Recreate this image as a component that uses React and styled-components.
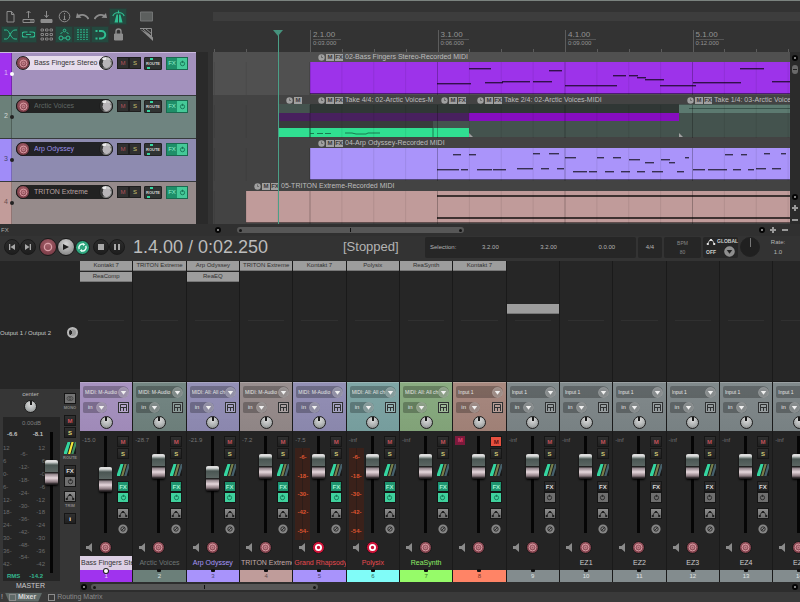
import React from 'react';
import styled, { createGlobalStyle, css } from 'styled-components';

const GlobalStyle = createGlobalStyle`
  * { box-sizing: border-box; }
  html, body { margin: 0; background: #333333; }
  body {
    font-family: "Liberation Sans", Arial, sans-serif;
    font-size: 7px;
    line-height: 8px;
    color: #b4b4b4;
    overflow: hidden;
  }
  button, select, input {
    font: inherit;
    color: inherit;
    margin: 0;
    padding: 0;
    border: 0;
    background: none;
  }
  svg { display: block; flex-shrink: 0; }
`;

/* ---------- data ---------- */

// width of the visible timeline, in ticks
const VIEW = 577;
const BAR = 127.5;
const FIRST_BAR = 97;
const pct = (ticks) => `${(ticks / VIEW) * 100}%`;

const tracks = [
  { name: 'Bass Fingers Stereo', strip: '#a033ee', body: '#a391bd', text: '#333333', field: '#e6dcec', num: '#d9b8f5', selected: true },
  { name: 'Arctic Voices', strip: '#6b8079', body: '#6f8480', text: '#5f6664', field: '#222323', num: '#d0d8d4' },
  { name: 'Arp Odyssey', strip: '#a08cf8', body: '#8e8bb0', text: '#9b8fe8', field: '#222226', num: '#4a4470' },
  { name: 'TRITON Extreme', strip: '#c29c9a', body: '#968b8b', text: '#b9a3a3', field: '#222222', num: '#6a5050' },
];

const lanes = [
  {
    selected: true,
    clips: [{ x: 97, w: 480, label: '02-Bass Fingers Stereo-Recorded MIDI', color: '#9d33ea' }],
    notes: [
      [224, 34, 31], [256, 22, 16], [272, 18, 30], [289, 28, 29], [320, 19, 29], [336, 13, 18], [352, 52, 33],
      [400, 13, 23], [416, 9, 23], [424, 9, 25], [432, 19, 27], [447, 36, 33], [480, 48, 30], [527, 24, 16], [559, 18, 29],
    ],
  },
  {
    clips: [
      { x: 65, w: 32, label: '', noFx: true },
      { x: 97, w: 123, label: 'Take 4/4: 02-Arctic Voices-MIDI' },
      { x: 220, w: 36, label: '' },
      { x: 256, w: 210, label: 'Take 2/4: 02-Arctic Voices-MIDI' },
      { x: 466, w: 111, label: 'Take 1/4: 03-Arctic Voices-MIDI' },
    ],
    takes: true,
    notes: [],
  },
  {
    clips: [{ x: 97, w: 480, label: '04-Arp Odyssey-Recorded MIDI', color: '#aa94fa' }],
    notes: [
      [240, 8, 16], [256, 7, 16], [224, 22, 31], [248, 7, 31], [264, 15, 31], [280, 13, 31],
      [320, 7, 15], [336, 10, 15], [304, 16, 30], [328, 8, 30], [344, 7, 30],
      [352, 11, 19], [384, 7, 19], [400, 8, 19], [416, 11, 21], [432, 9, 24], [448, 9, 21], [456, 6, 24], [472, 4, 19],
      [360, 14, 33], [376, 8, 33], [392, 9, 33], [408, 9, 33], [424, 8, 33], [439, 11, 33], [464, 7, 33],
      [480, 12, 31], [495, 19, 31], [520, 8, 31], [535, 6, 31], [543, 10, 30], [559, 9, 30],
      [512, 8, 16], [528, 6, 16], [551, 6, 15], [568, 5, 15],
    ],
  },
  {
    clips: [{ x: 33, w: 544, label: '05-TRITON Extreme-Recorded MIDI', color: '#c09b9a' }],
    notes: [[224, 353, 14], [224, 353, 36]],
  },
];

const midiM = 'MIDI: M-Audio';
const midiAll = 'MIDI: All: All ch';
const channels = [
  { name: 'Bass Fingers Stereo', fx: ['Kontakt 7', 'ReaComp'], input: midiM, db: '-15.0', vol: 57, tint: '#a590bf', bar: '#a033ee', num: '#ecd8fa', text: '#333333', selected: true },
  { name: 'Arctic Voices', fx: ['TRITON Extreme'], input: midiM, db: '-28.7', vol: 75, tint: '#70837f', bar: '#6b7f79', num: '#dfe5e2', text: '#6f7674' },
  { name: 'Arp Odyssey', fx: ['Arp Odyssey', 'ReaEQ'], input: midiAll, db: '-21.9', vol: 58, tint: '#918db5', bar: '#a893fb', num: '#4c4674', text: '#a497fa' },
  { name: 'TRITON Extreme', fx: ['TRITON Extreme'], input: midiM, db: '-7.2', vol: 75, tint: '#958a8a', bar: '#bf9c9a', num: '#604c4b', text: '#c2aaa8' },
  { name: 'Grand Rhapsody', fx: ['Kontakt 7'], input: midiM, db: '-7.5', vol: 75, tint: '#908cb3', bar: '#a893fb', num: '#4c4674', text: '#e84a4f', armed: true },
  { name: 'Polysix', fx: ['Polysix'], input: midiAll, db: '-inf', vol: 75, tint: '#7ba3a3', bar: '#80fcf8', num: '#2f6462', text: '#e84a4f', armed: true },
  { name: 'ReaSynth', fx: ['ReaSynth'], input: midiAll, db: '-inf', vol: 75, tint: '#86a97d', bar: '#96fb69', num: '#3d672c', text: '#8fee66' },
  { name: '', fx: ['Kontakt 7'], input: 'Input 1', db: '', vol: 75, tint: '#a5857b', bar: '#ff8466', num: '#7a382a', text: '#cccccc', muted: true },
  { name: '', fx: [], input: 'Input 1', send: true },
  { name: 'EZ1', fx: [], input: 'Input 1' },
  { name: 'EZ2', fx: [], input: 'Input 1' },
  { name: 'EZ3', fx: [], input: 'Input 1' },
  { name: 'EZ4', fx: [], input: 'Input 1' },
  { name: 'EZ5', fx: [], input: 'Input 1' },
].map((c) => ({ db: '-inf', vol: 75, tint: '#7d8688', bar: '#838c8e', num: '#e0e4e4', text: '#cccccc', ...c }));

/* ---------- shared parts ---------- */

const Knob = styled.input.attrs({ type: 'range' })`
  appearance: none;
  flex-shrink: 0;
  width: ${(p) => p.$size || 13}px;
  height: ${(p) => p.$size || 13}px;
  border-radius: 50%;
  border: 1px solid #1e1e1e;
  background:
    linear-gradient(#181818, #181818) 50% 0 / 2px 4px no-repeat,
    radial-gradient(circle at 50% 30%, #dcdcdc, #a9adad 60%, #777777);
  ${(p) => p.$dark && css`
    border-color: #222222;
    background: linear-gradient(#777777, #777777) 50% 0 / 1px 9px no-repeat, #202020;
  `}
  ${(p) => p.$trim && css`
    background:
      radial-gradient(circle at 55% 55%, #b8b5b8 0 42%, transparent 46%),
      conic-gradient(#c8c8c8 0 12%, #8a8a8a 20% 55%, #3a3a3a 62% 85%, #eeeeee 90%);
  `}
  ${(p) => p.$ring && css`
    border: 2px solid #b9b9b9;
    background: conic-gradient(#9a9a9a 0 60%, #262626 60% 90%, #9a9a9a 90%);
  `}
  &::-webkit-slider-thumb { appearance: none; opacity: 0; width: 1px; height: 1px; }
`;

const Fader = styled.input.attrs({ type: 'range' })`
  appearance: none;
  writing-mode: vertical-lr;
  direction: rtl;
  width: 13px;
  height: ${(p) => p.$length}px;
  background: linear-gradient(#050505, #050505) 50% 0 / 3px 100% no-repeat;
  &::-webkit-slider-thumb {
    appearance: none;
    width: 13px;
    height: 25px;
    border-radius: 2px;
    box-shadow: 0 1px 2px #000000;
    background: linear-gradient(#dddddd 0 2px, #a9b0ae 3px, #4a5653 5px, #5b6663 12px, #222222 12px 13px, #8f8288 14px, #e6d7dc 18px, #8b7a80 22px, #1f1b1d 24px);
  }
`;

const SquareButton = styled.button`
  display: flex;
  align-items: center;
  justify-content: center;
  width: 12px;
  height: 11px;
  border: 1px solid #161616;
  background: ${(p) => p.$bg || 'linear-gradient(#303030, #202020)'};
  color: ${(p) => p.$color || '#bbbbbb'};
`;

const RoundButton = styled.button`
  display: flex;
  align-items: center;
  justify-content: center;
  flex-shrink: 0;
  width: ${(p) => p.$size}px;
  height: ${(p) => p.$size}px;
  border-radius: 50%;
  border: 1px solid #1a1a1a;
  background: ${(p) => p.$bg || 'linear-gradient(#2c2c2c, #1e1e1e)'};
`;

const Tiny = styled.span`
  font-size: 5px;
  line-height: 6px;
  color: #888888;
`;

const recordBg = 'radial-gradient(circle at 50% 35%, #a35f69, #71333e)';

function RecordIcon({ armed, size }) {
  return (
    <svg width={size} height={size} viewBox="0 0 10 10" fill="none">
      <circle cx="5" cy="5" r={armed ? 2.9 : 3.8} stroke={armed ? '#ffffff' : '#d99aa2'} strokeWidth={armed ? 2 : 1.1} />
      {!armed && <circle cx="5" cy="5" r="1.4" stroke="#d99aa2" strokeWidth=".9" />}
    </svg>
  );
}

function RecordButton({ label, armed, size = 13 }) {
  return (
    <RoundButton $size={size} $bg={armed ? '#cf1238' : recordBg} aria-label={label}>
      <RecordIcon armed={armed} size={size > 14 ? 11 : 9} />
    </RoundButton>
  );
}

function PowerIcon({ color }) {
  return (
    <svg width="7" height="7" viewBox="0 0 8 8" fill="none" stroke={color}>
      <circle cx="4" cy="4.2" r="2.4" />
      <path d="M4 .8v2.6" />
    </svg>
  );
}

function EnvelopeIcon({ color = '#1f1f1f' }) {
  return (
    <svg width="10" height="9" viewBox="0 0 10 9" stroke={color} fill={color}>
      <path d="M1.5 7 3.8 3h2.4L8.5 7" fill="none" strokeWidth=".8" />
      <path d="M.8 6h2v2h-2zM4 2h2v2H4zM7.2 6h2v2h-2z" stroke="none" />
    </svg>
  );
}

function RouteIcon({ master }) {
  return (
    <svg width="12" height="12" viewBox="0 0 12 12">
      <path d="M3 0H12V12H0V10z" fill="#191919" />
      <path d="M3.500 0h3L3 12H0V10z" fill="#35d5a0" />
      <path d="M7.500 0h2.200L6.300 12H4z" fill={master ? '#f4e63c' : '#77804c'} />
      <path d="M10.700 0H12v4L9.500 12H7.200z" fill={master ? '#3f8f62' : '#46616c'} />
    </svg>
  );
}

function ArrowDot({ color = '#f0f0f0', fill = 'rgba(255,255,255,.25)' }) {
  return (
    <svg width="11" height="11" viewBox="0 0 11 11">
      <circle cx="5.500" cy="5.500" r="5" fill={fill} stroke="rgba(255,255,255,.2)" />
      <path d="M2.800 4h5.400L5.500 7.700z" fill={color} />
    </svg>
  );
}

/* ---------- toolbar ---------- */

const Workspace = styled.div`
  min-width: 800px;
  min-height: 100vh;
  display: flex;
  flex-direction: column;
  background: #333333;
  border-top: 1px solid #7b837f;
`;

const Upper = styled.div`
  display: grid;
  grid-template-columns: 208px minmax(0, 1fr) 10px;
  grid-template-rows: 51px auto;
`;

const Toolbar = styled.div`
  display: grid;
  grid-template-columns: repeat(7, 18px) 28px;
  grid-template-rows: 17px 17px;
  row-gap: 1px;
  align-content: start;
  padding: 7px 0 0 1px;
`;

const ToolButton = styled.button`
  display: flex;
  align-items: center;
  justify-content: center;
  padding-left: ${(p) => (p.$last ? 10 : 0)}px;
  background: ${(p) => (p.$on ? '#24493f' : 'transparent')};
  box-shadow: ${(p) => (p.$on ? 'inset 0 0 0 1px #2b3a36' : 'none')};
  color: ${(p) => (p.$on ? '#2fbf92' : '#8d8d8d')};
`;

const tools = [
  { label: 'New project', d: <path d="M3 1.500h4.500l2.500 3v7.500H3zM7.500 1.500v3H10" /> },
  { label: 'Open project', d: <><path d="M1 9.500h11v3H1zM6.500 8V1M4.500 3l2-2 2 2" /><path d="M8 11h3" /></> },
  { label: 'Save project', d: <><path d="M1 9.500h11v3H1z" fill="currentColor" /><path d="M6.500 1v6.500M4.500 5l2 2.500 2-2.500" /></> },
  { label: 'Project settings', d: <><circle cx="6.500" cy="6.500" r="5.300" /><path d="M6.500 5.500v4M6.500 3v1.300M5.300 9.500h2.400" /></> },
  { label: 'Undo', d: <><path d="M2 6c4-2 8-1 10.500 3" strokeWidth="1.800" /><path d="M0 8l1-5 4.500 4.800z" fill="currentColor" stroke="none" /></> },
  { label: 'Redo', d: <><path d="M11 6C7 4 3 5 .5 9" strokeWidth="1.800" /><path d="M13 8l-1-5-4.500 4.800z" fill="currentColor" stroke="none" /></> },
  { label: 'Metronome', on: true, d: <><path d="M4.500 4.500H6v8H2.500zM7 4.500h1.500l2 8H7z" fill="currentColor" stroke="none" /><path d="M.8 6c1-2.500 3-3.500 5.700-3.500s4.700 1 5.700 3.500M6.500 .5v3" strokeWidth="1.200" /></> },
  { label: 'Blank', d: <path d="M.5 2h12v9H.5z" fill="#5c5f5e" stroke="#727474" /> },
  { label: 'Auto crossfade', on: true, d: <path d="M0 2h2.500c3 0 4 9 8.500 9h2M0 11h2.500c3 0 4-9 8.500-9h2" /> },
  { label: 'Item grouping', on: true, d: <path d="M5.500 4h-3a2.500 2.500 0 0 0 0 5h3M7.500 4h3a2.500 2.500 0 0 1 0 5h-3M4 6.500h5" strokeWidth="1.200" /> },
  { label: 'Ripple editing', d: <path d="M1 1h2.500v2H1zM5.500 1H8v2H5.500zM10 1h2.500v2H10zM1 5.500h2.500v2H1zM5.500 5.500H8v2H5.500zM10 5.500h2.500v2H10zM1 10h2.500v2H1zM5.500 10H8v2H5.500zM10 10h2.500v2H10z" strokeWidth=".9" /> },
  { label: 'Envelope points', on: true, d: <><circle cx="3" cy="10" r="2" /><circle cx="10" cy="10" r="2" /><circle cx="6.500" cy="2.500" r="1.300" /><path d="M5 10h3M2.500 6l2-2M8.500 4l2 2" /></> },
  { label: 'Grid lines', on: true, d: <path d="M2 1v11M5 1v11M8 1v11M11 1v11" strokeDasharray="1.500 1" strokeWidth="1.300" /> },
  { label: 'Snap', on: true, d: <><path d="M5 3h2.500a3.500 3.500 0 0 1 0 7.500H5" strokeWidth="2" /><path d="M1.500 3h2M1.500 10.500h2" strokeWidth="2" /></> },
  { label: 'Lock', d: <><path d="M2.500 6h8v6h-8z" fill="currentColor" /><path d="M4 6V3.500a2.500 2.500 0 0 1 5 0V6" strokeWidth="1.400" /></> },
  { label: 'Custom', d: <><path d="M0 1l13 12V9.500L9 6z" fill="currentColor" stroke="none" /><path d="M0 .5h11.500v10M3 1l9 8M6 1l6 5" /></> },
];

/* ---------- track list ---------- */

const TrackList = styled.div`
  background: #2a2a2a;
`;

const TrackRow = styled.div`
  display: grid;
  grid-template-columns: 12px minmax(0, 1fr);
  height: 43px;
  margin-right: 12px;
  border-top: 1px solid ${(p) => (p.$selected ? '#cbb9de' : '#36393c')};
  background: ${(p) => p.$bg};
`;

const TrackTab = styled.div`
  position: relative;
  padding: 16px 0 0 4px;
  border-right: 1px solid rgba(0, 0, 0, 0.25);
  background: ${(p) => p.$bg};
  color: ${(p) => p.$color};
  &::after {
    content: "";
    position: absolute;
    right: -3px;
    top: 19px;
    width: 4px;
    height: 4px;
    border-radius: 50%;
    background: ${(p) => (p.$selected ? '#ffffff' : '#222222')};
  }
`;

const TrackControls = styled.div`
  display: flex;
  align-items: center;
  height: 14px;
  margin: 3px 0 0 4px;
`;

const TrackName = styled.div`
  display: flex;
  align-items: center;
  flex-shrink: 0;
  width: 97px;
  height: 14px;
  margin-right: 4px;
  border-radius: 7px;
  background: ${(p) => p.$bg};
  color: ${(p) => p.$color};
`;

const NameField = styled.input`
  width: 65px;
  margin-left: 4px;
  outline: 0;
`;

const PairButton = styled.button`
  height: 12px;
  width: 12px;
  font-size: 6px;
  border: 1px solid #1e1e1e;
  background: #303030;
  color: ${(p) => p.$color};
`;

const TrackRoute = styled.button`
  width: 18px;
  height: 13px;
  margin: 0 4px 0 3px;
  font-size: 4px;
  font-weight: bold;
  line-height: 11px;
  white-space: nowrap;
  border: 1px solid #222222;
  border-radius: 1px;
  color: #d2d2d2;
  background: linear-gradient(#35d5a0, #35d5a0) 5px 0 / 3px 2px no-repeat,
    linear-gradient(#35d5a0, #35d5a0) 2px 9px / 3px 2px no-repeat, #303332;
`;

const FxPair = styled.div`
  display: flex;
  height: 13px;
  border: 1px solid #196a4f;
  background: #1f8f69;
  button {
    display: flex;
    align-items: center;
    justify-content: center;
    width: 10px;
    font-size: 6px;
    color: #8ff0cc;
  }
  button + button { background: #45c998; }
`;

/* ---------- arrange view ---------- */

const RulerArea = styled.div`
  margin-left: 5px;
  display: flex;
  flex-direction: column;
`;

const Overview = styled.div`
  height: 9px;
  margin-top: 11px;
  margin-right: -10px;
  background: #3d3d3d;
`;

const Ruler = styled.div`
  position: relative;
  flex: 1;
  font-size: 8px;
  color: #949494;
  small { display: block; font-size: 6px; line-height: 7px; }
  small::before {
    content: "";
    display: block;
    width: 28px;
    border-top: 1px solid #555555;
  }
`;

const BarMark = styled.div`
  position: absolute;
  top: 9px;
  bottom: 0;
  padding-left: 2px;
  line-height: 9px;
  border-left: 1px solid #5c5c5c;
`;

const BeatMark = styled.div`
  position: absolute;
  bottom: 0;
  height: 3px;
  border-left: 1px solid #5c5c5c;
`;

const Lanes = styled.div`
  position: relative;
  margin-left: 5px;
`;

const Lane = styled.div`
  position: relative;
  height: 43px;
  overflow: hidden;
  background: ${(p) => (p.$selected ? '#505050' : '#434343')};
`;

const ClipBox = styled.div`
  position: absolute;
  top: 0;
  bottom: 0;
  display: flex;
  flex-direction: column;
`;

const ClipLabel = styled.div`
  display: flex;
  align-items: center;
  gap: 1px;
  height: 10px;
  padding-left: 8px;
  overflow: hidden;
  white-space: nowrap;
  color: #bdbdbd;
  b {
    flex-shrink: 0;
    width: 8px;
    height: 7px;
    font-size: 6px;
    line-height: 7px;
    text-align: center;
    color: #3a3a3a;
    background: #a0a0a0;
  }
  span { padding-left: 1px; }
`;

const ClipBody = styled.div`
  flex: 1;
  margin-bottom: 1px;
  border-bottom: 1px solid rgba(0, 0, 0, 0.5);
  background: ${(p) => p.$color};
`;

const LaneDrawing = styled.svg`
  position: absolute;
  inset: 0;
  width: 100%;
  height: 100%;
  pointer-events: none;
`;

const Playhead = styled.div`
  position: absolute;
  top: -17px;
  bottom: 0;
  width: 1px;
  background: #4b9f87;
  &::before {
    content: "";
    position: absolute;
    left: -5px;
    top: -5px;
    border: 5px solid transparent;
    border-top: 6px solid #46927d;
    border-bottom: 0;
  }
`;

const VScroll = styled.div`
  display: flex;
  flex-direction: column;
  align-items: center;
  justify-content: space-between;
  padding: 3px 0 0;
  background: #2b2b2b;
`;

const ScrollStack = styled.div`
  display: flex;
  flex-direction: ${(p) => (p.$row ? 'row' : 'column')};
  align-items: center;
  gap: 4px;
`;

const ScrollDot = styled.button`
  width: 6px;
  height: 6px;
  border-radius: 50%;
  border: 2px solid #050505;
  background: #aaaaaa;
`;

const ScrollGrip = styled.div`
  width: 6px;
  height: 9px;
  border-radius: 3px;
  background: linear-gradient(#222222, #222222) 50% 50% / 4px 1px no-repeat, #6a6a6a;
`;

const ZoomButton = styled.button`
  width: 8px;
  height: 8px;
  background: linear-gradient(#999999, #999999) 50% 50% / 6px 2px no-repeat
    ${(p) => (p.$plus ? ', linear-gradient(#999999, #999999) 50% 50% / 2px 6px no-repeat' : '')};
`;

const HScroll = styled.div`
  display: flex;
  align-items: center;
  gap: 16px;
  height: 12px;
  padding: 0 11px 0 2px;
  background: #303030;
`;

const MixerScroll = styled(HScroll)`
  gap: 4px;
  height: 10px;
  padding: 0 2px 0 1px;
  background: #2d2d2d;
`;

const ScrollThumb = styled.div`
  display: flex;
  align-items: center;
  justify-content: space-between;
  width: 227px;
  height: 6px;
  padding: 0 2px;
  border-radius: 3px;
  background: linear-gradient(#111111, #111111) 50% 50% / 1px 4px no-repeat, #575757;
  &::before, &::after {
    content: "";
    width: 3px;
    height: 3px;
    border-radius: 50%;
    background: #151515;
  }
`;

const Spacer = styled.div`
  flex: 1;
`;

const FxRow = styled.div`
  display: grid;
  grid-template-columns: 213px minmax(0, 1fr);
  align-items: center;
  background: #303030;
  > span { padding-left: 1px; font-size: 6px; color: #aaaaaa; }
`;

/* ---------- transport ---------- */

const Transport = styled.div`
  display: flex;
  align-items: center;
  height: 25px;
  padding: 0 4px 3px;
`;

const TransportGroup = styled.div`
  display: flex;
  align-items: center;
  margin-right: ${(p) => p.$gap}px;
`;

const Clock = styled.output`
  width: 210px;
  font-size: 18px;
  line-height: 20px;
  color: #bcbcbc;
`;

const Status = styled.output`
  flex: 1;
  font-size: 13px;
  line-height: 16px;
  color: #b4b4b4;
`;

const InfoBox = styled.div`
  display: flex;
  flex-direction: column;
  align-items: center;
  justify-content: space-evenly;
  flex-shrink: 0;
  width: ${(p) => p.$width}px;
  height: 21px;
  margin-right: 2px;
  border-radius: 2px;
  font-size: 6px;
  background: #262626;
`;

const SelectionBox = styled(InfoBox)`
  display: grid;
  grid-template-columns: 36px repeat(3, 58px);
  text-align: center;
`;

const GlobalLine = styled.div`
  display: flex;
  align-items: center;
  justify-content: space-between;
  gap: 1px;
  width: 29px;
  font-size: 5px;
  font-weight: bold;
  color: #cfcfcf;
`;

const RateBox = styled.div`
  display: flex;
  flex-direction: column;
  align-items: center;
  gap: 2px;
  width: 36px;
  font-size: 6px;
`;

/* ---------- mixer ---------- */

const Mixer = styled.div`
  display: grid;
  grid-template-columns: 80px minmax(0, 1fr);
  background: #262626;
`;

const Strips = styled.div`
  display: flex;
  overflow: hidden;
`;

const Strip = styled.section`
  flex: 0 0 calc(100% / 13.5);
  min-width: 0;
  display: flex;
  flex-direction: column;
  border-right: 1px solid #1a1a1a;
  background: #242424;
`;

const FxArea = styled.div`
  display: flex;
  flex-direction: column;
  height: 121px;
  background: #262626;
  border-bottom: 1px solid #1b1b1b;
`;

const FxList = styled.div`
  display: flex;
  flex-direction: column;
  justify-content: ${(p) => (p.$end ? 'flex-end' : 'flex-start')};
  gap: 1px;
  height: 53px;
  margin-bottom: 6px;
`;

const FxSlot = styled.button`
  height: 10px;
  overflow: hidden;
  font-size: 6px;
  line-height: 9px;
  white-space: nowrap;
  color: #303030;
  background: #9d9d9d;
  border-bottom: 1px solid #777777;
`;

const SendLine = styled.div`
  margin: 0 8px;
  border-top: 1px solid #303030;
`;

const InputArea = styled.div`
  display: flex;
  flex-direction: column;
  gap: 3px;
  height: 49px;
  padding: 3px 3px 0;
  border-top: 1px solid rgba(255, 255, 255, 0.25);
  background: linear-gradient(rgba(255, 255, 255, 0.03), rgba(0, 0, 0, 0.04)) ${(p) => p.$tint};
`;

const InputPicker = styled.label`
  display: flex;
  align-items: center;
  height: 12px;
  padding-left: 2px;
  border-radius: 2px 6px 6px 2px;
  background: rgba(0, 0, 0, 0.25);
  select {
    appearance: none;
    flex: 1;
    min-width: 0;
    font-size: 5px;
    outline: 0;
    color: #e4e4e4;
    text-overflow: clip;
  }
`;

const InputRow = styled.div`
  display: flex;
  align-items: center;
  justify-content: space-between;
  height: 12px;
`;

const InPill = styled.button`
  display: flex;
  align-items: center;
  justify-content: space-between;
  width: 24px;
  height: 11px;
  padding-left: 5px;
  border-radius: 2px 6px 6px 2px;
  font-size: 6px;
  color: #e4e4e4;
  background: rgba(0, 0, 0, 0.25);
`;

const PanRow = styled.div`
  display: flex;
  justify-content: center;
`;

const Channel = styled.div`
  display: grid;
  grid-template-columns: 19px 18px 12px;
  height: 107px;
  padding-top: 5px;
`;

const LevelColumn = styled.div`
  display: flex;
  flex-direction: column;
  align-items: flex-start;
  gap: 4px;
  padding-left: 2px;
  font-size: 6px;
  white-space: nowrap;
  color: #747474;
`;

const MuteFlag = styled.b`
  width: 10px;
  line-height: 9px;
  text-align: center;
  color: #e0406b;
  background: #7c1a3c;
`;

const HotMeter = styled.div`
  display: flex;
  flex-direction: column;
  justify-content: space-around;
  align-items: center;
  width: 15px;
  height: 92px;
  font-weight: bold;
  color: #dd5430;
  background: repeating-linear-gradient(90deg, #3a211a 0 7px, #2c1d19 7px 8px);
`;

const SideColumn = styled.div`
  display: flex;
  flex-direction: column;
  gap: 5px;
  font-size: 6px;
  font-weight: bold;
`;

const ButtonPair = styled.div`
  display: flex;
  flex-direction: column;
  gap: ${(p) => p.$gap || 0}px;
`;

const ArmRow = styled.div`
  display: grid;
  grid-template-columns: 19px 13px;
  align-items: center;
  height: 18px;
  svg { justify-self: center; }
`;

const StripName = styled.div`
  height: 14px;
  padding: 0 1px;
  overflow: hidden;
  line-height: 14px;
  white-space: nowrap;
  text-align: ${(p) => (p.$long ? 'left' : 'center')};
  color: ${(p) => p.$color};
  background: ${(p) => (p.$selected ? '#dccfe4' : 'transparent')};
`;

const StripNumber = styled.div`
  position: relative;
  height: 12px;
  font-size: 6px;
  line-height: 13px;
  text-align: center;
  color: ${(p) => p.$color};
  background: ${(p) => p.$bg};
  &::before {
    content: "";
    position: absolute;
    left: calc(50% - 2px);
    top: -1px;
    width: 4px;
    height: ${(p) => (p.$selected ? 4 : 3)}px;
    border-radius: ${(p) => (p.$selected ? '50%' : '1px')};
    background: ${(p) => (p.$selected ? '#ffffff' : '#111111')};
    box-shadow: ${(p) => (p.$selected ? '0 0 0 1px #222222' : 'none')};
  }
`;

const Master = styled.section`
  display: flex;
  flex-direction: column;
`;

const MasterOutput = styled.div`
  display: flex;
  align-items: center;
  justify-content: space-between;
  height: 128px;
  padding: 15px 2px 0 0;
  font-size: 6px;
  white-space: nowrap;
  color: #c6c6c6;
`;

const MasterPanel = styled.div`
  flex: 1;
  display: grid;
  grid-template-columns: 59px 12px;
  column-gap: 4px;
  background: #363636;
  padding: 0 2px 0 1px;
`;

const MasterMain = styled.div`
  display: flex;
  flex-direction: column;
  align-items: center;
`;

const CenterLabel = styled.div`
  font-size: 6px;
  padding-top: 1px;
  margin-bottom: 2px;
  color: #b8b8b8;
`;

const MasterMeter = styled.div`
  align-self: stretch;
  height: 164px;
  margin: 4px 0 0 2px;
  background: #252525;
  display: grid;
  grid-template-columns: 42px 13px;
  grid-template-rows: 12px 12px 1fr 10px;
  font-size: 6px;
  > em {
    grid-column: 1 / 3;
    padding: 2px 0 0 2px;
    font-style: normal;
    text-align: center;
    color: #7d7d7d;
  }
`;

const PeakRow = styled.div`
  display: flex;
  justify-content: space-between;
  padding: 1px 2px 0 4px;
  color: ${(p) => p.$color || '#c0c0c0'};
  font-weight: bold;
`;

const Scale = styled.div`
  display: flex;
  justify-content: space-between;
  color: #6d6d6d;
`;

const ScaleColumn = styled.div`
  display: flex;
  flex-direction: column;
  justify-content: space-around;
  padding: ${(p) => (p.$mid ? '7px 0' : '1px 0')};
  text-align: ${(p) => p.$align || 'left'};
`;

const MasterFader = styled.div`
  grid-column: 2;
  grid-row: 2 / 5;
  padding-top: 3px;
`;

const MasterTitle = styled.div`
  line-height: 9px;
  color: #cccccc;
`;

const MasterSide = styled(SideColumn)`
  gap: 4px;
  padding-top: 4px;
  > div {
    display: flex;
    flex-direction: column;
    align-items: center;
  }
  ${Tiny} { font-size: 4px; padding-top: 1px; }
`;

const Tabs = styled.nav`
  display: flex;
  align-items: center;
  gap: 2px;
  height: 10px;
  padding-left: 1px;
  background: #3a3a3a;
`;

const Tab = styled.button`
  display: flex;
  align-items: center;
  gap: 2px;
  height: 9px;
  padding: 0 6px 0 4px;
  font-weight: ${(p) => (p.$on ? 'bold' : 'normal')};
  color: ${(p) => (p.$on ? '#d8d8d8' : '#8b8b8b')};
  background: ${(p) => (p.$on ? '#5f6a68' : 'transparent')};
  clip-path: ${(p) => (p.$on ? 'polygon(0 0, 100% 0, calc(100% - 4px) 100%, 4px 100%)' : 'none')};
  &::before {
    content: "";
    width: 5px;
    height: 5px;
    border: 1px solid #8b8b8b;
  }
`;

function Track({ track, index }) {
  return (
    <TrackRow $bg={track.body} $selected={track.selected}>
      <TrackTab $bg={track.strip} $color={track.num} $selected={track.selected}>{index + 1}</TrackTab>
      <TrackControls>
        <TrackName $bg={track.field} $color={track.text}>
          <RecordButton label={`Arm ${track.name}`} size={14} />
          <NameField defaultValue={track.name} aria-label={`Track ${index + 1} name`} />
          <Knob $size={14} $trim aria-label={`${track.name} volume`} />
        </TrackName>
        <PairButton $color="#b0505a">M</PairButton>
        <PairButton $color="#c9c370">S</PairButton>
        <TrackRoute>ROUTE</TrackRoute>
        <FxPair>
          <button>FX</button>
          <button aria-label="Bypass effects"><PowerIcon color="#167254" /></button>
        </FxPair>
      </TrackControls>
    </TrackRow>
  );
}

function Clip({ clip }) {
  return (
    <ClipBox style={{ left: pct(clip.x), width: pct(clip.w) }}>
      <ClipLabel>
        <svg width="7" height="7" viewBox="0 0 7 7">
          <circle cx="3.500" cy="3.500" r="3.200" fill="#a0a0a0" />
          <path d="M3.500 1.500v2h1.500" stroke="#555555" strokeWidth=".7" fill="none" />
        </svg>
        <b>M</b>
        {!clip.noFx && <b>FX</b>}
        {clip.label && <span>{clip.label}</span>}
      </ClipLabel>
      {clip.color && <ClipBody $color={clip.color} />}
    </ClipBox>
  );
}

function TakeLanes() {
  return (
    <LaneDrawing viewBox={`0 0 ${VIEW} 43`} preserveAspectRatio="none">
      <rect x="65" y="9" width="512" height="33" fill="#44534e" />
      <rect x="97" y="9" width="123" height="33" fill="#363b3a" />
      <rect x="97" y="9" width="369" height="9" fill="#303735" />
      <rect x="65" y="26" width="155" height="7" fill="#383d3c" />
      <rect x="65" y="18" width="191" height="8" fill="#48205e" />
      <rect x="256" y="18" width="210" height="8" fill="#860dc0" />
      <rect x="65" y="33" width="191" height="9" fill="#30df91" />
      <rect x="466" y="10" width="111" height="8" fill="#5c7a70" />
      <path d="M476 13.500H577" stroke="#38524a" />
      <path d="M97 38.500h4M104 38.500h6M112 38.500h6M132 38h7l4 1h10l2-1h12M97 33v9M220 33v9" stroke="#187a50" fill="none" />
      <path d="M256 38l4 4h-4zM466 38l4 4h-4z" fill="#a0a0a0" />
    </LaneDrawing>
  );
}

function Arrange() {
  const beats = [];
  for (let x = FIRST_BAR - (BAR / 4) * 3; x < VIEW; x += BAR / 4) beats.push(x);
  return (
    <Lanes>
      {lanes.map((lane, i) => (
        <Lane key={i} $selected={lane.selected}>
          {lane.takes && <TakeLanes />}
          {lane.clips.map((clip) => <Clip key={clip.x} clip={clip} />)}
          <LaneDrawing viewBox={`0 0 ${VIEW} 43`} preserveAspectRatio="none">
            {beats.map((x, n) => (
              <path key={x} d={`M${x} 10V43`} stroke="#000000" strokeOpacity={n % 4 === 3 ? 0.25 : 0.08} />
            ))}
            {lane.notes.map(([x, w, y]) => (
              <rect key={`${x}-${y}`} x={x} y={y} width={w} height={i === 3 ? 2 : 1.4} fill="#000000" fillOpacity=".68" />
            ))}
          </LaneDrawing>
        </Lane>
      ))}
      <Playhead style={{ left: pct(65) }} />
    </Lanes>
  );
}

function TimeRuler() {
  const bars = ['0:03.000', '0:06.000', '0:09.000', '0:12.000'];
  const beats = [];
  for (let n = -3; n < 16; n += 1) if (n % 4) beats.push(FIRST_BAR + (n * BAR) / 4);
  return (
    <Ruler>
      {beats.map((x) => <BeatMark key={x} style={{ left: pct(x) }} />)}
      {bars.map((time, i) => (
        <BarMark key={time} style={{ left: pct(FIRST_BAR + i * BAR) }}>
          {i + 2}.1.00
          <small>{time}</small>
        </BarMark>
      ))}
    </Ruler>
  );
}

function TransportBar() {
  return (
    <Transport>
      <TransportGroup $gap={3}>
        <RoundButton $size={16} aria-label="Go to start">
          <svg width="8" height="8" viewBox="0 0 8 8" fill="#a8a8a8"><path d="M1 1h1.300v6H1zM7 1v6L2.500 4z" /></svg>
        </RoundButton>
        <RoundButton $size={16} aria-label="Go to end">
          <svg width="8" height="8" viewBox="0 0 8 8" fill="#a8a8a8"><path d="M5.700 1H7v6H5.700zM1 1v6l4.500-3z" /></svg>
        </RoundButton>
      </TransportGroup>
      <TransportGroup $gap={3}>
        <RoundButton $size={18} $bg={recordBg} aria-label="Record">
          <svg width="10" height="10" viewBox="0 0 10 10" fill="none"><circle cx="5" cy="5" r="3.600" stroke="#dba0a8" strokeWidth="1.300" /></svg>
        </RoundButton>
        <RoundButton $size={18} $bg="radial-gradient(circle at 50% 30%, #d5d5d5, #777777)" aria-label="Play">
          <svg width="8" height="8" viewBox="0 0 8 8" fill="#1d1d1d"><path d="M1 1l6 3-6 3z" /></svg>
        </RoundButton>
        <RoundButton $size={15} $bg="#2ea67e" aria-label="Repeat">
          <svg width="11" height="11" viewBox="0 0 10 10" fill="none" stroke="#eafff7" strokeWidth="1.300">
            <path d="M2 6.500A3.300 3.300 0 0 1 6 2M8 3.500A3.300 3.300 0 0 1 4 8" />
            <path d="M5.500.8l2 1.400-2 1.500zM4.500 9.200l-2-1.400 2-1.500z" fill="#eafff7" stroke="none" />
          </svg>
        </RoundButton>
      </TransportGroup>
      <TransportGroup $gap={8}>
        <RoundButton $size={16} aria-label="Stop">
          <svg width="6" height="6"><rect width="6" height="6" fill="#a8a8a8" /></svg>
        </RoundButton>
        <RoundButton $size={16} aria-label="Pause">
          <svg width="6" height="6" fill="#a8a8a8"><path d="M0 0h2v6H0zM4 0h2v6H4z" /></svg>
        </RoundButton>
      </TransportGroup>
      <Clock>1.4.00 / 0:02.250</Clock>
      <Status>[Stopped]</Status>
      <SelectionBox $width={211}>
        <span>Selection:</span>
        <span>3.2.00</span>
        <span>3.2.00</span>
        <span>0.0.00</span>
      </SelectionBox>
      <InfoBox $width={24}>4/4</InfoBox>
      <InfoBox $width={37}>
        <Tiny>BPM</Tiny>
        <Tiny>80</Tiny>
      </InfoBox>
      <InfoBox $width={35}>
        <GlobalLine><EnvelopeIcon color="#e0e0e0" />GLOBAL</GlobalLine>
        <GlobalLine>OFF<ArrowDot color="#222222" fill="#8d8d8d" /></GlobalLine>
      </InfoBox>
      <Knob $size={20} $dark aria-label="Play rate" />
      <RateBox><span>Rate:</span><span>1.0</span></RateBox>
    </Transport>
  );
}

function FxButtons({ on }) {
  return (
    <ButtonPair>
      <SquareButton $bg={on ? '#1f9670' : undefined} $color={on ? '#a0f0d2' : '#dddddd'}>FX</SquareButton>
      <SquareButton $bg={on ? '#3fd19d' : '#6f6f6f'} aria-label="Bypass effects">
        <PowerIcon color={on ? '#157353' : '#262626'} />
      </SquareButton>
    </ButtonPair>
  );
}

function ChannelStrip({ channel, number }) {
  const label = channel.name || `Channel ${number}`;
  return (
    <Strip>
      <FxArea>
        <FxList $end={channel.send}>
          {channel.fx.map((fx) => <FxSlot key={fx}>{fx}</FxSlot>)}
          {channel.send && <FxSlot aria-label="Empty slot" />}
        </FxList>
        <SendLine />
      </FxArea>
      <InputArea $tint={channel.tint}>
        <InputPicker>
          <select aria-label={`${label} input`} defaultValue={channel.input}>
            <option>{channel.input}</option>
          </select>
          <ArrowDot />
        </InputPicker>
        <InputRow>
          <InPill>in<ArrowDot /></InPill>
          <svg width="11" height="11" viewBox="0 0 11 11" fill="none" stroke="#2f3132">
            <rect x=".5" y=".5" width="10" height="10" fill="rgba(255,255,255,.2)" />
            <path d="M2.500 9V2.500h6V9M2.500 5.500h6M5.500 5.500V9" />
          </svg>
        </InputRow>
        <PanRow><Knob aria-label={`${label} pan`} /></PanRow>
      </InputArea>
      <Channel>
        <LevelColumn>
          {channel.muted ? <MuteFlag>M</MuteFlag> : <span>{channel.db}</span>}
          {channel.armed && (
            <HotMeter>
              {[-6, -18, -30, -42, -54].map((n) => <span key={n}>{n}-</span>)}
            </HotMeter>
          )}
        </LevelColumn>
        <Fader $length={97} defaultValue={channel.vol} aria-label={`${label} volume`} />
        <SideColumn>
          <ButtonPair $gap={1}>
            <SquareButton $color={channel.muted ? '#5d1010' : '#c05058'} $bg={channel.muted ? '#e5503f' : undefined}>M</SquareButton>
            <SquareButton $color="#d3cb78">S</SquareButton>
          </ButtonPair>
          <RouteIcon />
          <FxButtons on={channel.fx.length > 0} />
          <SquareButton $bg="linear-gradient(#8d8d8d, #6c6c6c)" aria-label="Envelopes"><EnvelopeIcon /></SquareButton>
          <svg width="12" height="10" viewBox="0 0 12 10" fill="none" stroke="#2d2d2d">
            <circle cx="6" cy="5" r="4.600" fill="#868686" stroke="none" />
            <circle cx="6" cy="5" r="2.200" />
            <path d="M4 7l4-4" />
          </svg>
        </SideColumn>
      </Channel>
      <ArmRow>
        <svg width="7" height="9" viewBox="0 0 7 9" fill="#8a8a8a"><path d="M0 3h2.500L6 0v9L2.500 6H0z" /></svg>
        <RecordButton label={`Arm ${label}`} armed={channel.armed} />
      </ArmRow>
      <StripName $color={channel.text} $selected={channel.selected} $long={channel.name.length > 13}>{channel.name}</StripName>
      <StripNumber $color={channel.num} $bg={channel.bar} $selected={channel.selected}>{number}</StripNumber>
    </Strip>
  );
}

function MasterStrip() {
  return (
    <Master>
      <MasterOutput>
        <span>Output 1 / Output 2</span>
        <Knob $size={11} $ring aria-label="Output trim" />
      </MasterOutput>
      <MasterPanel>
        <MasterMain>
          <CenterLabel>center</CenterLabel>
          <Knob aria-label="Master pan" />
          <MasterMeter>
            <em>0.00dB</em>
            <PeakRow><span>-6.6</span><span>-8.1</span></PeakRow>
            <Scale>
              <ScaleColumn>{['12', '6', '0-', '6-', '12-', '18-', '24-', '30-', '36-', '42-'].map((s) => <span key={s}>{s}</span>)}</ScaleColumn>
              <ScaleColumn $mid $align="center">{[6, 12, 18, 24, 30, 36, 42, 48, 54].map((s) => <span key={s}>-{s}-</span>)}</ScaleColumn>
              <ScaleColumn $align="right">{['12', '6', '-0', '-6', '-12', '-18', '-24', '-30', '-36', '-42'].map((s) => <span key={s}>{s}</span>)}</ScaleColumn>
            </Scale>
            <PeakRow $color="#35b890"><span>RMS</span><span>-14.2</span></PeakRow>
            <MasterFader><Fader $length={141} defaultValue={76} aria-label="Master volume" /></MasterFader>
          </MasterMeter>
          <MasterTitle>MASTER</MasterTitle>
        </MasterMain>
        <MasterSide>
          <div>
            <SquareButton $bg="#747474" aria-label="Mono">
              <svg width="8" height="7" viewBox="0 0 8 7" fill="none" stroke="#4a4a4a"><circle cx="3" cy="3.500" r="2" /><circle cx="5" cy="3.500" r="2" /></svg>
            </SquareButton>
            <Tiny>MONO</Tiny>
          </div>
          <ButtonPair $gap={1}>
            <SquareButton $color="#d2505a">M</SquareButton>
            <SquareButton $color="#e2da76">S</SquareButton>
          </ButtonPair>
          <div>
            <RouteIcon master />
            <Tiny>ROUTE</Tiny>
          </div>
          <FxButtons />
          <div>
            <SquareButton $bg="linear-gradient(#8d8d8d, #6c6c6c)" aria-label="Envelopes"><EnvelopeIcon /></SquareButton>
            <Tiny>TRIM</Tiny>
          </div>
          <SquareButton $color="#ffffff" aria-label="Info">i</SquareButton>
        </MasterSide>
      </MasterPanel>
    </Master>
  );
}

export default function App() {
  return (
    <Workspace>
      <GlobalStyle />
      <Upper>
        <Toolbar>
          {tools.map((tool, i) => (
            <ToolButton key={tool.label} $on={tool.on} $last={i % 8 === 7} aria-label={tool.label}>
              <svg width="13" height="13" viewBox="0 0 13 13" fill="none" stroke="currentColor">{tool.d}</svg>
            </ToolButton>
          ))}
        </Toolbar>
        <RulerArea>
          <Overview />
          <TimeRuler />
        </RulerArea>
        <div />
        <TrackList>
          {tracks.map((track, i) => <Track key={track.name} track={track} index={i} />)}
        </TrackList>
        <Arrange />
        <VScroll>
          <ScrollStack><ScrollDot aria-label="Scroll up" /><ScrollGrip /></ScrollStack>
          <ScrollStack>
            <ScrollDot aria-label="Scroll down" />
            <ZoomButton $plus aria-label="Zoom in tracks" />
            <ZoomButton aria-label="Zoom out tracks" />
          </ScrollStack>
        </VScroll>
      </Upper>
      <FxRow>
        <span>FX</span>
        <HScroll>
          <ScrollDot aria-label="Scroll left" />
          <ScrollThumb />
          <Spacer />
          <ScrollStack $row>
            <ScrollDot aria-label="Scroll right" />
            <ZoomButton $plus aria-label="Zoom in" />
            <ZoomButton aria-label="Zoom out" />
          </ScrollStack>
        </HScroll>
      </FxRow>
      <TransportBar />
      <Mixer>
        <MasterStrip />
        <div>
          <Strips>
            {channels.map((channel, i) => <ChannelStrip key={i} channel={channel} number={i + 1} />)}
          </Strips>
          <MixerScroll>
            <ScrollDot aria-label="Scroll mixer left" />
            <ScrollThumb />
            <Spacer />
            <ScrollDot aria-label="Scroll mixer right" />
          </MixerScroll>
        </div>
      </Mixer>
      <Tabs>
        <span>!</span>
        <Tab $on>Mixer</Tab>
        <Tab>Routing Matrix</Tab>
      </Tabs>
    </Workspace>
  );
}
